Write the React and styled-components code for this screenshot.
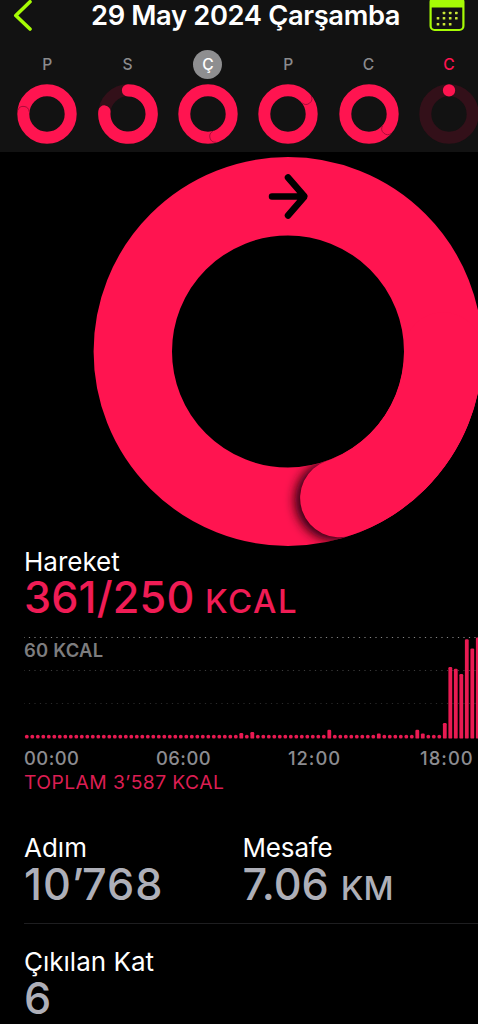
import React from "react";
import styled, { createGlobalStyle } from "styled-components";

const PINK = "#ff1450";
const LIME = "#a6fb05";

const GlobalStyle = createGlobalStyle`
  html, body { margin: 0; background: #000; }
  * { box-sizing: border-box; }
`;

const Screen = styled.main`
  width: 478px;
  height: 1024px;
  overflow: hidden;
  display: flex;
  flex-direction: column;
  background: #000;
  color: #fff;
  font-family: Inter, "Liberation Sans", sans-serif;
`;

const Header = styled.header`
  flex: none;
  height: 152px;
  background: #121212;
  overflow: hidden;
`;

const TitleBar = styled.div`
  display: flex;
  align-items: flex-start;
  height: 50px;
  padding-left: 12px;
`;

const Title = styled.h1`
  margin: 0 0 0 57px;
  width: 338px;
  font-size: 27.3px;
  line-height: 31px;
  font-weight: 600;
  letter-spacing: ${(p) => p.$spacing}px;
  white-space: nowrap;
`;

const Icon = styled.svg`
  display: block;
  flex: none;
`;

const Week = styled.div`
  display: grid;
  grid-template-columns: repeat(6, 80.33px);
  padding-left: 7.1px;
`;

const Day = styled.div`
  display: flex;
  flex-direction: column;
  align-items: center;
  gap: 5.3px;
`;

const DayLetter = styled.span`
  width: 29px;
  height: 29px;
  border-radius: 50%;
  font-size: 15.6px;
  line-height: 29px;
  text-align: center;
  font-weight: 500;
  background: ${(p) => (p.$selected ? "#8e8e90" : "transparent")};
  color: ${(p) => (p.$selected ? "#fff" : p.$today ? PINK : "#8b8b8d")};
`;

const RingArea = styled.section`
  flex: none;
  height: 396px;
  padding: 5px 0 0 93px;
`;

const Section = styled.section`
  flex: none;
  padding-left: 24px;
`;

const Label = styled.div`
  font-size: 26px;
  line-height: 27px;
  font-weight: 400;
  letter-spacing: ${(p) => p.$spacing ?? 0}px;
  white-space: nowrap;
`;

const Value = styled.div`
  font-size: 43.2px;
  line-height: ${(p) => (p.$move ? 45 : 47)}px;
  height: 46px;
  font-weight: 500;
  color: ${(p) => (p.$move ? "#f01c55" : "#aeafb8")};
  letter-spacing: ${(p) => p.$spacing ?? 0}px;
  white-space: nowrap;
`;

const Unit = styled.span`
  font-size: 33px;
  letter-spacing: ${(p) => p.$spacing ?? 0}px;
  margin-left: ${(p) => p.$gap}px;
`;

const Chart = styled.div`
  display: grid;
  width: 454px;
  height: 104px;
  margin-top: 14px;
`;

const Plot = styled.svg`
  grid-area: 1 / 1;
  display: block;
`;

const ScaleLabel = styled.span`
  grid-area: 1 / 1;
  margin-top: 3px;
  font-size: 18.4px;
  line-height: 24px;
  font-weight: 600;
  color: #7d7d7f;
  letter-spacing: ${(p) => p.$spacing}px;
`;

const Hours = styled.div`
  display: grid;
  grid-template-columns: repeat(4, 132px);
  margin-top: 7px;
  font-size: 18.4px;
  line-height: 24px;
  font-weight: 500;
  color: #8c8c90;
`;

const Hour = styled.span`
  letter-spacing: ${(p) => p.$spacing}px;
`;

const Total = styled.div`
  font-size: 19.3px;
  line-height: 24px;
  color: #dc1e53;
  letter-spacing: ${(p) => p.$spacing}px;
`;

const Stats = styled.div`
  display: grid;
  grid-template-columns: 218.5px 1fr;
  height: 90px;
  margin-top: 40px;
  border-bottom: 1px solid #1e1e20;
`;

const Stat = styled.div`
  padding-top: ${(p) => p.$top ?? 0}px;
`;

const point = (angle, r) => {
  const a = (angle * Math.PI) / 180;
  return [30 + r * Math.sin(a), 30 - r * Math.cos(a)];
};

function MiniRing({ full, end }) {
  const [x, y] = point(end, 23.7);
  if (full) {
    const [x1, y1] = point(end, 29.4);
    const [x2, y2] = point(end, 18);
    return (
      <Icon width="60" height="60" viewBox="0 0 60 60">
        <circle cx="30" cy="30" r="23.7" fill="none" stroke={PINK} strokeWidth="12" />
        <path d={`M${x1} ${y1}A5.8 5.8 0 0 1 ${x2} ${y2}`} fill="none" stroke="#a00c36" strokeWidth="0.9" />
      </Icon>
    );
  }
  return (
    <Icon width="60" height="60" viewBox="0 0 60 60">
      <circle cx="30" cy="30" r="23.7" fill="none" stroke="#331019" strokeWidth="12" />
      <path
        d={`M30 6.3A23.7 23.7 0 ${end > 180 ? 1 : 0} 1 ${x} ${y}`}
        fill="none"
        stroke={PINK}
        strokeWidth="12.3"
        strokeLinecap="round"
      />
    </Icon>
  );
}

function MoveRing() {
  return (
    <Icon width="390" height="390" viewBox="0 0 390 390">
      <defs>
        <clipPath id="band">
          <path
            clipRule="evenodd"
            d="M0.6 194.5a194.4 194.4 0 1 0 388.8 0a194.4 194.4 0 1 0 -388.8 0ZM79 194.5a116 116 0 1 0 232 0a116 116 0 1 0 -232 0Z"
          />
        </clipPath>
        <filter id="soft" x="-50%" y="-50%" width="200%" height="200%">
          <feGaussianBlur stdDeviation="5.5" />
        </filter>
      </defs>
      <circle cx="195" cy="194.5" r="155.2" fill="none" stroke={PINK} strokeWidth="78.4" />
      <g clipPath="url(#band)">
        <circle cx="242.5" cy="343" r="40.5" fill="#26000c" filter="url(#soft)" />
        <path
          d="M246.4 341A155.2 155.2 0 0 0 350.2 194.5"
          fill="none"
          stroke={PINK}
          strokeWidth="78.6"
          strokeLinecap="round"
        />
      </g>
      <path
        d="M179 39.5H211M195 20.5L211.500 39.500L195 58.500"
        fill="none"
        stroke="#000"
        strokeWidth="6.500"
        strokeLinecap="round"
        strokeLinejoin="round"
      />
    </Icon>
  );
}

const peaks = {
  39: 5.5, 41: 6.5, 55: 8.8, 64: 5, 71: 8.8, 72: 5.2, 76: 15.5,
  77: 71.5, 78: 69.8, 79: 64.5, 80: 99.3, 81: 90.2, 82: 101,
};

const bars = Array.from({ length: 83 }, (_, i) => peaks[i] ?? 3.9);
const gridLines = [
  { y: 2.5, color: "#858585" },
  { y: 35.5, color: "#3c3c3c" },
  { y: 68.5, color: "#2a2a2a" },
];

function HourlyBars() {
  return (
    <Plot width="454" height="104" viewBox="0 0 454 104">
      {gridLines.map((g) => (
        <line key={g.y} x1="-0.600" x2="454" y1={g.y} y2={g.y} stroke={g.color} strokeDasharray="1.2 4.3" />
      ))}
      {bars.map((h, i) => (
        <rect key={i} x={0.9 + i * 5.5} y={103.6 - h} width="3.8" height={h} rx={h < 4 ? 1.9 : 1.2} fill="#e91a52" />
      ))}
    </Plot>
  );
}

const days = [
  { letter: "P", full: true, end: 277 },
  { letter: "S", end: 276 },
  { letter: "Ç", full: true, end: 164, selected: true },
  { letter: "P", full: true, end: 52 },
  { letter: "C", full: true, end: 131 },
  { letter: "C", end: 0.1, today: true },
];

const dots = [
  [15, 13], [21.2, 13], [27.3, 13],
  [9, 18.2], [15, 18.2], [21.2, 18.2], [27.3, 18.2],
  [9, 24.2], [15, 24.2], [21.2, 24.2],
];

export default function App() {
  return (
    <Screen>
      <GlobalStyle />
      <Header>
        <TitleBar>
          <Icon width="22" height="34" viewBox="0 0 22 34">
            <path d="M18 1.800L3.800 15.500L18 29" fill="none" stroke={LIME} strokeWidth="3.600" strokeLinecap="round" strokeLinejoin="round" />
          </Icon>
          <Title $spacing={-0.35}>29 May 2024 Çarşamba</Title>
          <Icon width="36" height="33" viewBox="0 0 36 33">
            <rect x="1.600" y="-2" width="32.800" height="32" rx="4" fill="none" stroke={LIME} strokeWidth="2.200" />
            <path d="M1 0H35V7.400H1Z" fill={LIME} />
            {dots.map(([x, y]) => (
              <rect key={`${x}-${y}`} x={x - 1.3} y={y - 1.3} width="2.600" height="2.600" rx="0.600" fill="#c9e836" />
            ))}
          </Icon>
        </TitleBar>
        <Week>
          {days.map((d, i) => (
            <Day key={i}>
              <DayLetter $selected={d.selected} $today={d.today}>{d.letter}</DayLetter>
              <MiniRing full={d.full} end={d.end} />
            </Day>
          ))}
        </Week>
      </Header>

      <RingArea>
        <MoveRing />
      </RingArea>

      <Section>
        <Label>Hareket</Label>
        <Value $move $spacing={0.15}>
          361/250<Unit $gap={10.5} $spacing={1.6}>KCAL</Unit>
        </Value>
        <Chart>
          <HourlyBars />
          <ScaleLabel $spacing={0.25}>60 KCAL</ScaleLabel>
        </Chart>
        <Hours>
          <Hour $spacing={0.45}>00:00</Hour>
          <Hour $spacing={0.45}>06:00</Hour>
          <Hour $spacing={0.95}>12:00</Hour>
          <Hour $spacing={1.05}>18:00</Hour>
        </Hours>
        <Total $spacing={0.42}>TOPLAM 3’587 KCAL</Total>
        <Stats>
          <Stat>
            <Label>Adım</Label>
            <Value $spacing={1}>10’768</Value>
          </Stat>
          <Stat>
            <Label $spacing={-0.15}>Mesafe</Label>
            <Value>
              7.06<Unit $gap={12}>KM</Unit>
            </Value>
          </Stat>
        </Stats>
        <Stat $top={24}>
          <Label>Çıkılan Kat</Label>
          <Value>6</Value>
        </Stat>
      </Section>
    </Screen>
  );
}
